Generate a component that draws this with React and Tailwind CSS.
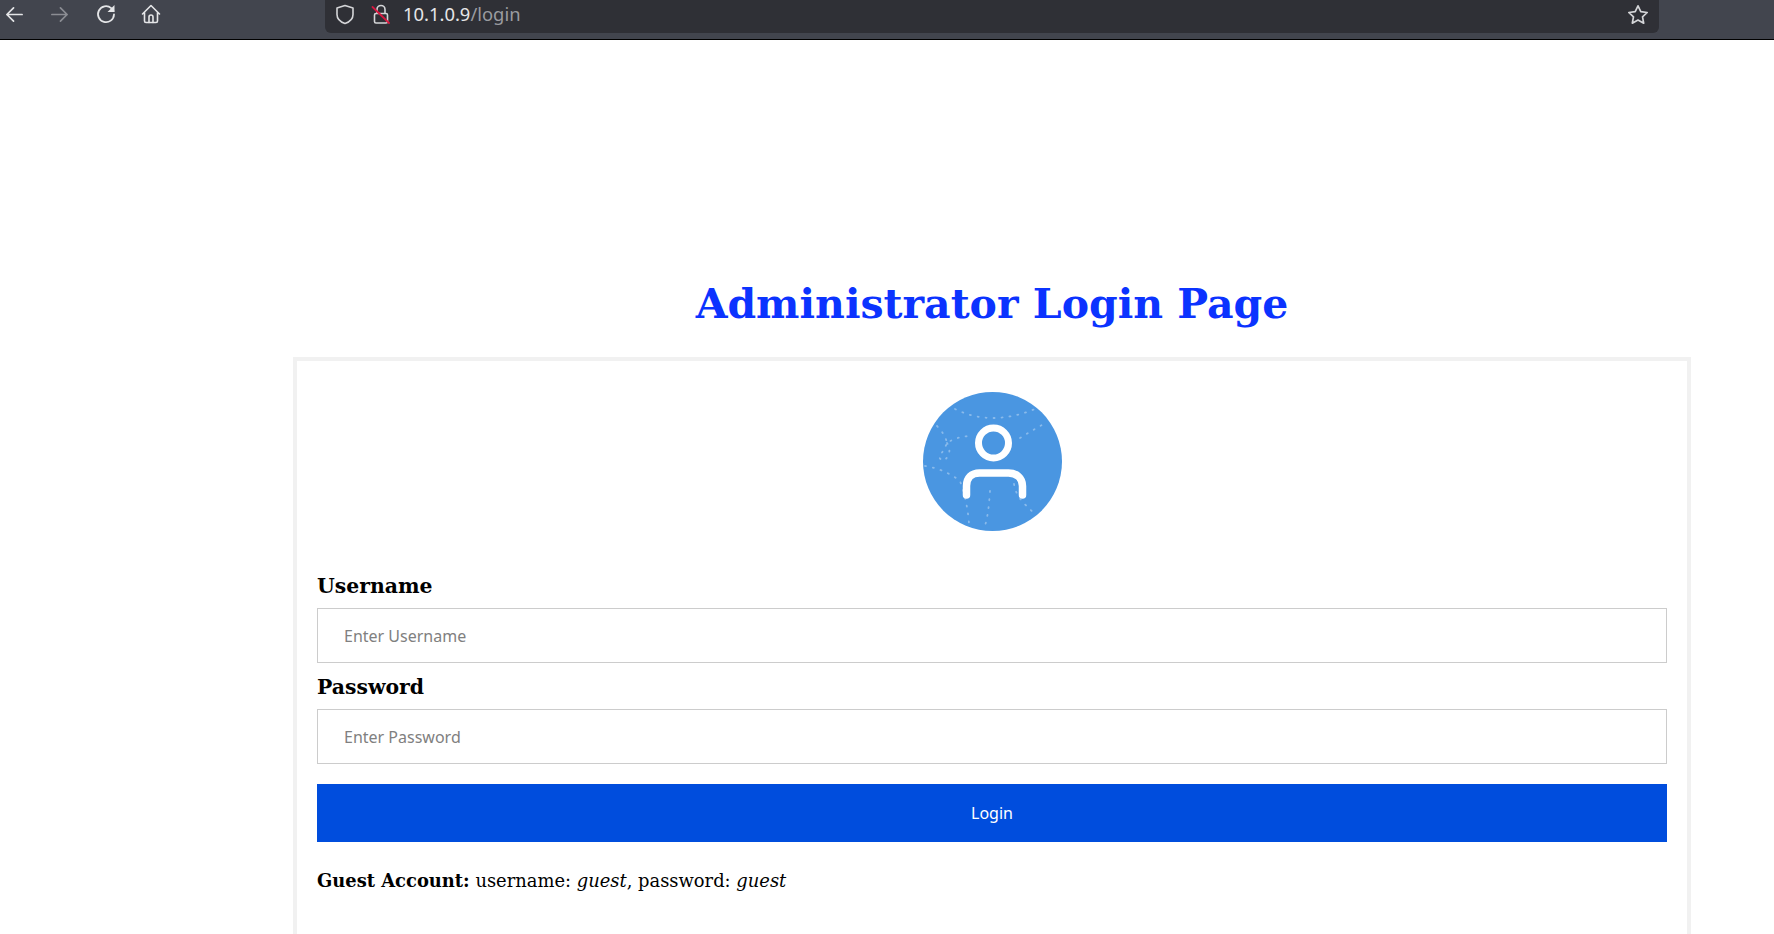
const serif = "font-['DejaVu_Serif',serif]";

function Toolbar() {
  return (
    <div className="flex h-[40px] items-start border-b border-black bg-[#42454e]">
      <div className="flex h-[39px] w-[325px] shrink-0 items-center pb-[11px] text-[#e4e5e7]">
        <svg className="ml-[5px]" width="19" height="19" viewBox="0 0 20 20" fill="none" stroke="currentColor" strokeWidth="1.8" strokeLinecap="round" strokeLinejoin="round">
          <path d="M18 10H2M9 3l-7 7 7 7" />
        </svg>
        <svg className="ml-[26px] text-[#8b8d93]" width="19" height="19" viewBox="0 0 20 20" fill="none" stroke="currentColor" strokeWidth="1.8" strokeLinecap="round" strokeLinejoin="round">
          <path d="M2 10h16M11 3l7 7-7 7" />
        </svg>
        <svg className="ml-[27px]" width="20" height="20" viewBox="0 0 20 20" fill="none" stroke="currentColor" strokeWidth="1.8" strokeLinecap="round" strokeLinejoin="round">
          <path d="M18 10.500a8 8 0 1 1-2.800-6.400L17.500 7" />
          <path d="M18.500 1V8h-7" fill="currentColor" stroke="none" />
        </svg>
        <svg className="ml-[25px]" width="20" height="20" viewBox="0 0 20 20" fill="none" stroke="currentColor" strokeWidth="1.6" strokeLinecap="round" strokeLinejoin="round">
          <path d="M1.500 10 10 1.500 18.500 10M3.500 8.500V17a1.500 1.500 0 0 0 1.500 1.500h10a1.500 1.500 0 0 0 1.500-1.500V8.500" />
          <path d="M8 18.500V13a2 2 0 0 1 4 0v5.500" />
        </svg>
      </div>
      <div className="flex h-[33px] w-[1334px] shrink-0 items-center rounded-b-[6px] bg-[#2f3036] pb-[5px]">
        <svg className="ml-[10px]" width="20" height="21" viewBox="0 0 20 21" fill="none" stroke="#d4d5d8" strokeWidth="1.6" strokeLinejoin="round">
          <path d="M10 1.500 2 4v6.500c0 4.500 3.500 7.500 8 9 4.500-1.500 8-4.500 8-9V4z" />
        </svg>
        <svg className="ml-[16px]" width="20" height="21" viewBox="0 0 20 21" fill="none" strokeLinecap="round">
          <path d="M6 9V5.500a4 4 0 0 1 8 0V9" stroke="#d4d5d8" strokeWidth="1.600" />
          <rect x="3.500" y="9.500" width="13" height="9.500" rx="1.500" stroke="#d4d5d8" strokeWidth="1.600" />
          <path d="M1.500 3 18 19" stroke="#d7173f" strokeWidth="1.800" />
        </svg>
        <span className="ml-[12px] font-['Noto_Sans',sans-serif] text-[18.4px] leading-none text-[#e6e6e8]">
          10.1.0.9<span className="text-[#9a9ba0]">/login</span>
        </span>
        <svg className="mr-[10px] ml-auto" width="22" height="21" viewBox="0 0 22 21" fill="none" stroke="#d4d5d8" strokeWidth="1.700" strokeLinejoin="round">
          <path d="m11 1.800 2.800 5.900 6.400.8-4.700 4.400 1.200 6.300L11 16.100l-5.700 3.100 1.200-6.300-4.700-4.400 6.400-.8z" />
        </svg>
      </div>
    </div>
  );
}

function Avatar() {
  return (
    <svg className="mx-auto block" width="139" height="139" viewBox="0 0 139 139" fill="none">
      <circle cx="69.500" cy="69.500" r="69.500" fill="#4a96e1" />
      <g stroke="#ffffff" strokeOpacity="0.35" strokeWidth="1.800" strokeDasharray="1 7" strokeLinecap="round">
        <path d="M32 17c24 12 50 12 80 0" />
        <path d="M97 46c10-6 16-10 24-14" />
        <path d="M14 34c6 6 9 12 10 17 6-4 12-6 22-7M24 51c4 6 3 12-3 18-3-1-5-3-5-5 2-2 4-4 8-13" />
        <path d="M2 74c14 2 26 8 35 15 5 14 8 28 9 43" />
        <path d="M67 99c-1 14-2 26-6 38" />
        <path d="M91 92c2 12 8 18 20 29" />
      </g>
      <circle cx="70.500" cy="51" r="15" stroke="#ffffff" strokeWidth="7" />
      <path d="M43.500 103V94c0-8 5-13 13-13h29c8 0 14 5 14 13v9" stroke="#ffffff" strokeWidth="7.500" strokeLinecap="round" />
    </svg>
  );
}

export default function App() {
  return (
    <div className="h-[934px] overflow-hidden bg-white">
      <Toolbar />
      <div className="mr-[83px] ml-[293px]">
        <h1 className={`${serif} mt-[240px] mb-[29px] text-center text-[41px] leading-[48px] font-bold text-[#0b33ff]`}>
          Administrator Login Page
        </h1>
        <div className="border-4 border-[#f1f1f1] px-[20px] pt-[31px] pb-[80px]">
          <Avatar />
          <form className={serif}>
            <label className="mt-[42px] block text-[20.4px] leading-[26px] font-bold text-black">Username</label>
            <input
              placeholder="Enter Username"
              className="mt-[9px] block h-[55px] w-full border border-[#cccccc] px-[26px] font-['Noto_Sans',sans-serif] text-[16px] placeholder:text-[#808080]"
            />
            <label className="mt-[11px] block text-[20.4px] leading-[26px] font-bold text-black">Password</label>
            <input
              placeholder="Enter Password"
              className="mt-[9px] block h-[55px] w-full border border-[#cccccc] px-[26px] font-['Noto_Sans',sans-serif] text-[16px] placeholder:text-[#808080]"
            />
            <button
              type="button"
              className="mt-[20px] block h-[58px] w-full bg-[#004ddd] font-['Noto_Sans',sans-serif] text-[16px] text-white"
            >
              Login
            </button>
            <p className="mt-[26px] text-[17.9px] leading-[26px] text-black">
              <b>Guest Account:</b> username: <i>guest</i>, password: <i>guest</i>
            </p>
          </form>
        </div>
      </div>
    </div>
  );
}
